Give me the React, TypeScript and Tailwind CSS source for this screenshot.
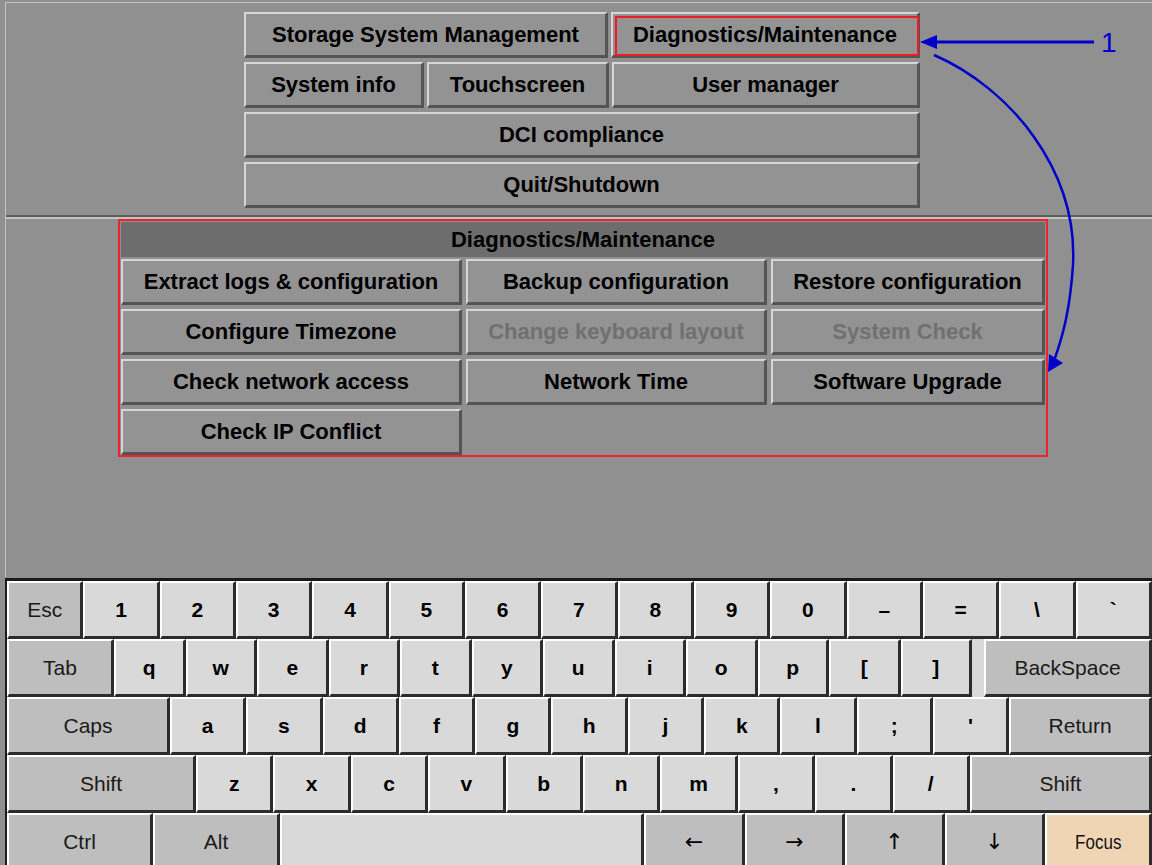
import React from "react";

type BtnProps = {
  label: string;
  className?: string;
  disabled?: boolean;
  marked?: boolean;
};

function MenuButton({ label, className = "", disabled, marked }: BtnProps) {
  return (
    <div
      className={`relative flex items-center justify-center border-t-2 border-l-2 border-r-[3px] border-b-[3px] border-t-[#d6d6d6] border-l-[#d6d6d6] border-r-[#545454] border-b-[#545454] bg-[#939393] text-[22px] font-bold leading-none ${
        disabled ? "text-[#707070]" : "text-black"
      } ${className}`}
    >
      {label}
      {marked && (
        <span className="absolute left-[2px] top-[2px] right-[-2px] bottom-[-1px] border-2 border-[#f01c24]" />
      )}
    </div>
  );
}

type KeyProps = {
  label?: string;
  w?: string;
  kind?: "char" | "mod" | "focus" | "arrow";
};

function Key({ label = "", w = "flex-1", kind = "char" }: KeyProps) {
  const face =
    kind === "char"
      ? "bg-[#d9d9d9] font-bold text-[21px] text-black"
      : kind === "focus"
        ? "bg-[#f0d5b4] text-[20px] text-[#111]"
        : kind === "arrow"
          ? "bg-[#bebebe] text-[22px] text-black font-['DejaVu_Sans',sans-serif]"
          : "bg-[#bebebe] text-[21px] text-[#1a1a1a]";
  return (
    <div
      className={`flex h-full shrink-0 items-center justify-center border-t-2 border-l-2 border-r-[3px] border-b-[3px] border-t-white border-l-white border-r-[#2c2c2c] border-b-[#2c2c2c] leading-none ${face} ${w}`}
    >
      {kind === "focus" ? <span className="inline-block scale-x-[0.85]">{label}</span> : label}
    </div>
  );
}

const row1 = ["1", "2", "3", "4", "5", "6", "7", "8", "9", "0", "–", "=", "\\", "`"];
const row2 = ["q", "w", "e", "r", "t", "y", "u", "i", "o", "p", "[", "]"];
const row3 = ["a", "s", "d", "f", "g", "h", "j", "k", "l", ";", "'"];
const row4 = ["z", "x", "c", "v", "b", "n", "m", ",", ".", "/"];

export default function App() {
  return (
    <div className="relative h-[865px] w-[1152px] overflow-hidden bg-[#909090] font-['Liberation_Sans',Arial,sans-serif]">
      <div className="ml-[5px] mt-[2px] h-[575px] border-l border-t border-[#c4c4c4]">
        {/* top menu */}
        <div className="flex w-[914px] flex-col gap-[4px] pl-[238px] pt-[9px]">
          <div className="flex h-[46px] gap-[3px]">
            <MenuButton label="Storage System Management" className="w-[364px]" />
            <MenuButton label="Diagnostics/Maintenance" className="flex-1" marked />
          </div>
          <div className="flex h-[46px] gap-[3px]">
            <MenuButton label="System info" className="w-[180px]" />
            <MenuButton label="Touchscreen" className="w-[182px]" />
            <MenuButton label="User manager" className="flex-1" />
          </div>
          <div className="flex h-[46px]">
            <MenuButton label="DCI compliance" className="flex-1" />
          </div>
          <div className="flex h-[46px]">
            <MenuButton label="Quit/Shutdown" className="flex-1" />
          </div>
        </div>

        <div className="mt-[7px] h-[2px] bg-[#5c5c5c]" />
        <div className="h-[2px] bg-[#c4c4c4]" />

        {/* diagnostics panel */}
        <div className="ml-[112px] flex h-[238px] w-[930px] flex-col border-2 border-[#ee2228]">
          <div className="mx-[1px] mt-[1px] flex h-[35px] items-center justify-center bg-[#6d6d6d] text-[22px] font-bold leading-none text-black">
            Diagnostics/Maintenance
          </div>
          <div className="mt-[2px] grid grid-cols-[341px_301px_274px] grid-rows-[46px_46px_46px_46px] gap-x-[4px] gap-y-[4px] pl-[1px]">
            <MenuButton label="Extract logs & configuration" />
            <MenuButton label="Backup configuration" />
            <MenuButton label="Restore configuration" />
            <MenuButton label="Configure Timezone" />
            <MenuButton label="Change keyboard layout" disabled />
            <MenuButton label="System Check" disabled />
            <MenuButton label="Check network access" />
            <MenuButton label="Network Time" />
            <MenuButton label="Software Upgrade" />
            <MenuButton label="Check IP Conflict" />
          </div>
        </div>
      </div>

      {/* on-screen keyboard */}
      <div className="ml-[5px] mt-[1px] border-l-2 border-t-[3px] border-[#1a1a1a] bg-[#d9d9d9]">
        <div className="flex h-[58px]">
          <Key label="Esc" kind="mod" />
          {row1.map((k) => (
            <Key key={k} label={k} />
          ))}
        </div>
        <div className="flex h-[58px]">
          <Key label="Tab" kind="mod" w="w-[107px]" />
          {row2.map((k) => (
            <Key key={k} label={k} w="w-[71.5px]" />
          ))}
          <div className="w-[12px] shrink-0" />
          <Key label="BackSpace" kind="mod" />
        </div>
        <div className="flex h-[58px]">
          <Key label="Caps" kind="mod" w="w-[163px]" />
          {row3.map((k) => (
            <Key key={k} label={k} w="w-[76.3px]" />
          ))}
          <Key label="Return" kind="mod" />
        </div>
        <div className="flex h-[58px]">
          <Key label="Shift" kind="mod" w="w-[189px]" />
          {row4.map((k) => (
            <Key key={k} label={k} w="w-[77.4px]" />
          ))}
          <Key label="Shift" kind="mod" />
        </div>
        <div className="flex h-[58px]">
          <Key label="Ctrl" kind="mod" w="w-[146px]" />
          <Key label="Alt" kind="mod" w="w-[127px]" />
          <Key w="w-[364px]" />
          <Key label="←" kind="arrow" w="w-[101px]" />
          <Key label="→" kind="arrow" w="w-[100px]" />
          <Key label="↑" kind="arrow" w="w-[100px]" />
          <Key label="↓" kind="arrow" w="w-[100px]" />
          <Key label="Focus" kind="focus" />
        </div>
      </div>

      {/* callout annotation */}
      <svg
        className="pointer-events-none absolute left-0 top-0"
        width="1152"
        height="865"
        viewBox="0 0 1152 865"
      >
        <line x1="932" y1="42" x2="1094" y2="42" stroke="#0000cc" strokeWidth="3" />
        <polygon points="920,42 937,35 937,49" fill="#0000cc" />
        <path
          d="M934,55 C1010,88 1078,170 1073,265 C1070,310 1063,335 1055,358"
          fill="none"
          stroke="#0000cc"
          strokeWidth="2.5"
        />
        <polygon points="1048,372 1049,354 1063,363" fill="#0000cc" />
      </svg>
      <span className="pointer-events-none absolute left-[1101px] top-[29px] text-[28px] leading-none text-[#0000cc]">
        1
      </span>
    </div>
  );
}
